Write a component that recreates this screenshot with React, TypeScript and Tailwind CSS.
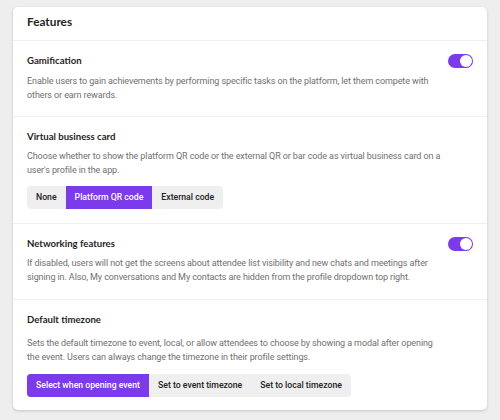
import { useState } from "react";

const body = "font-['Roboto',sans-serif]";
const head = "font-['Lato',sans-serif]";

function Toggle({ on, onChange }: { on: boolean; onChange: () => void }) {
  return (
    <button
      onClick={onChange}
      className={`relative h-[14px] w-[25px] shrink-0 rounded-full ${on ? "bg-[#7c3aed]" : "bg-gray-300"}`}
    >
      <span
        className={`absolute top-[1px] h-[12px] w-[12px] rounded-full bg-white ${on ? "left-[12px]" : "left-[1px]"}`}
      />
    </button>
  );
}

function Segmented({ options, value, onChange }: { options: string[]; value: number; onChange: (i: number) => void }) {
  return (
    <div className="flex">
      <div className="flex overflow-hidden rounded-[4px] bg-[#efefef]">
        {options.map((o, i) => (
          <button
            key={o}
            onClick={() => onChange(i)}
            className={`h-[23px] px-[9px] text-[8.7px] font-medium ${body} ${
              i === value ? "bg-[#7c3aed] text-white" : "text-[#222]"
            }`}
          >
            {o}
          </button>
        ))}
      </div>
    </div>
  );
}

const title = `${head} text-[9.6px] font-bold leading-[14px] text-[#1f1f1f]`;
const desc = `${body} max-w-[416px] text-[9px] tracking-[-0.1px] leading-[14px] text-[#707070]`;

export default function App() {
  const [gamification, setGamification] = useState(true);
  const [networking, setNetworking] = useState(true);
  const [card, setCard] = useState(1);
  const [tz, setTz] = useState(0);

  return (
    <div className="h-[420px] w-[500px] bg-[#eeeeee] px-[13px] pt-[7px]">
      <div className="rounded-[5px] bg-white shadow-[0_1px_3px_rgba(0,0,0,0.18)]">
        <div className="px-[14px] pb-[10px] pt-[7px]">
          <h2 className={`${head} text-[11.8px] font-bold leading-[16px] text-[#1f1f1f]`}>Features</h2>
        </div>

        <div className="border-t border-[#f0f0f0] px-[14px] pb-[14px] pt-[13px]">
          <div className="flex items-center justify-between">
            <h3 className={title}>Gamification</h3>
            <Toggle on={gamification} onChange={() => setGamification(!gamification)} />
          </div>
          <p className={`${desc} mt-[6px]`}>
            Enable users to gain achievements by performing specific tasks on the platform, let them compete with
            others or earn rewards.
          </p>
        </div>

        <div className="border-t border-[#f0f0f0] px-[14px] pb-[14px] pt-[13px]">
          <h3 className={title}>Virtual business card</h3>
          <p className={`${desc} mt-[5px]`}>
            Choose whether to show the platform QR code or the external QR or bar code as virtual business card on a
            user's profile in the app.
          </p>
          <div className="mt-[9px]">
            <Segmented options={["None", "Platform QR code", "External code"]} value={card} onChange={setCard} />
          </div>
        </div>

        <div className="border-t border-[#f0f0f0] px-[14px] pb-[15px] pt-[13px]">
          <div className="flex items-center justify-between">
            <h3 className={title}>Networking features</h3>
            <Toggle on={networking} onChange={() => setNetworking(!networking)} />
          </div>
          <p className={`${desc} mt-[5px]`}>
            If disabled, users will not get the screens about attendee list visibility and new chats and meetings after
            signing in. Also, My conversations and My contacts are hidden from the profile dropdown top right.
          </p>
        </div>

        <div className="border-t border-[#f0f0f0] px-[14px] pb-[13px] pt-[13px]">
          <h3 className={title}>Default timezone</h3>
          <p className={`${desc} mt-[9px]`}>
            Sets the default timezone to event, local, or allow attendees to choose by showing a modal after opening
            the event. Users can always change the timezone in their profile settings.
          </p>
          <div className="mt-[10px]">
            <Segmented
              options={["Select when opening event", "Set to event timezone", "Set to local timezone"]}
              value={tz}
              onChange={setTz}
            />
          </div>
        </div>
      </div>
    </div>
  );
}
